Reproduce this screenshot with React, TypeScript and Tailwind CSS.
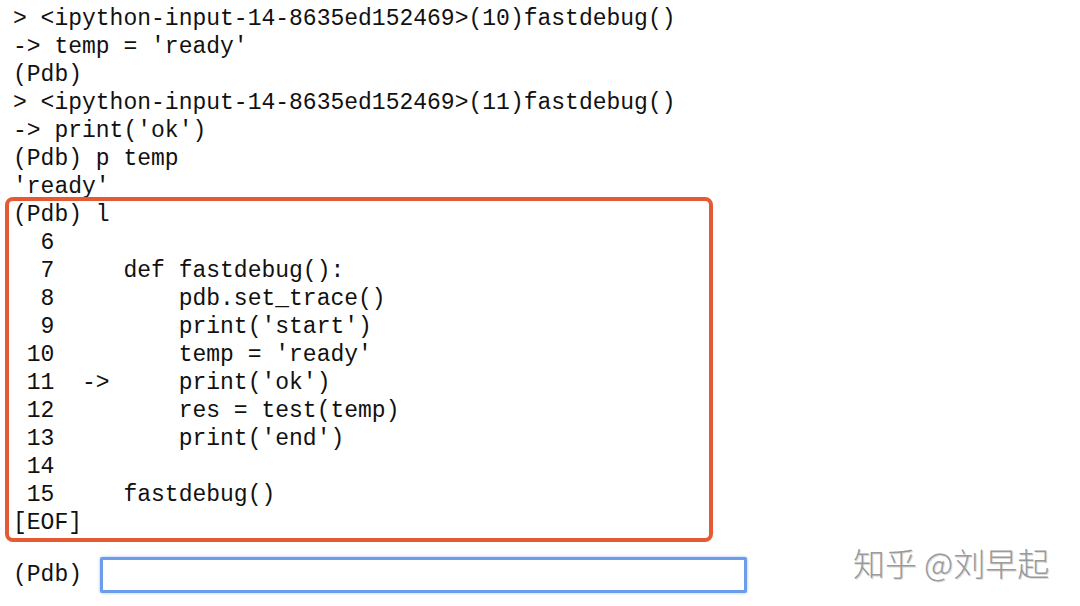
const head = [
  "> <ipython-input-14-8635ed152469>(10)fastdebug()",
  "-> temp = 'ready'",
  "(Pdb)",
  "> <ipython-input-14-8635ed152469>(11)fastdebug()",
  "-> print('ok')",
  "(Pdb) p temp",
  "'ready'",
];

const listing = [
  "(Pdb) l",
  "  6",
  "  7     def fastdebug():",
  "  8         pdb.set_trace()",
  "  9         print('start')",
  " 10         temp = 'ready'",
  " 11  ->     print('ok')",
  " 12         res = test(temp)",
  " 13         print('end')",
  " 14",
  " 15     fastdebug()",
  "[EOF]",
];

export default function App() {
  return (
    <div className="relative w-[1080px] h-[606px] overflow-hidden bg-white text-[#111111] font-['Liberation_Mono','Courier_New',monospace] text-[23px] leading-[28px]">
      <div className="pt-[5px] pl-[13px]">
        {head.map((line, i) => (
          <div key={i} className="whitespace-pre h-[28px]">
            {line}
          </div>
        ))}
      </div>

      {/* highlighted listing, border overlaps the last descender like the screenshot */}
      <div className="relative -mt-[4px] ml-[5px] w-[708px] border-4 border-[#e65a33] rounded-[8px] pl-[4px] pb-[1px] bg-white/0">
        {listing.map((line, i) => (
          <div key={i} className="whitespace-pre h-[28px]">
            {line}
          </div>
        ))}
      </div>

      <div className="flex items-center mt-[15px] pl-[13px] gap-[18px]">
        <span className="whitespace-pre">(Pdb)</span>
        <input
          type="text"
          className="w-[647px] h-[36px] border-[3px] border-[#6d9cec] rounded-[2px] bg-white outline-none shadow-[0_0_3px_#9bbcf2]"
        />
      </div>

      <div className="absolute left-[853px] top-[542px] text-[32px] leading-[40px] font-light text-[#9a9a9a] font-['Noto_Sans_CJK_SC',sans-serif] [text-shadow:1px_1px_0_#dddddd]">
        知乎 @刘早起
      </div>
    </div>
  );
}
